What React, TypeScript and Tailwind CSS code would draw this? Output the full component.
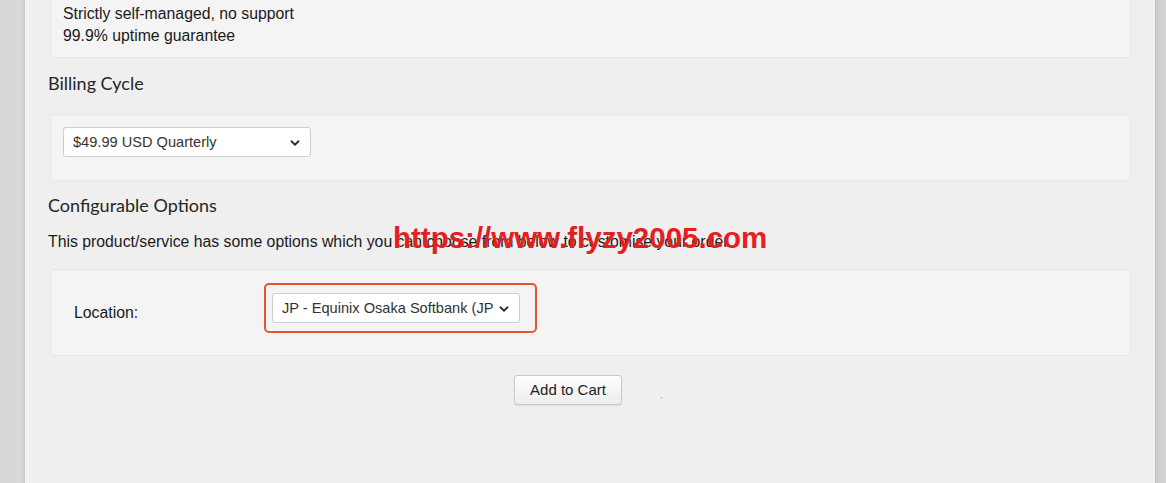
import { ChevronDown } from "lucide-react";

const sans = { fontFamily: '"Liberation Sans", Arial, sans-serif' };

const Card = ({ className, children }: { className?: string; children: React.ReactNode }) => (
  <div
    className={`mx-[2px] rounded-[3px] border border-[#e7e7e7] bg-[#f4f4f4] shadow-[inset_0_1px_1px_rgba(0,0,0,0.03)] ${className ?? ""}`}
  >
    {children}
  </div>
);

const FakeSelect = ({ label, width }: { label: string; width: string }) => (
  <div
    className={`flex h-[30px] items-center justify-between overflow-hidden rounded-[3px] border border-[#cdcdcd] bg-white pl-[9px] pr-[8px] pt-[2px] text-[14.6px] text-[#333] ${width}`}
  >
    <span className="overflow-hidden whitespace-nowrap">{label}</span>
    <ChevronDown className="ml-1 h-[14px] w-[14px] shrink-0 text-[#333]" strokeWidth={3.2} />
  </div>
);

const Heading = ({ children, className }: { children: React.ReactNode; className?: string }) => (
  <h3
    className={`h-[26px] text-[18px] font-normal leading-[26px] text-[#262626] ${className ?? ""}`}
    style={{ fontFamily: 'Lato, "Open Sans", sans-serif' }}
  >
    {children}
  </h3>
);

export default function App() {
  return (
    <div className="flex h-[483px] w-[1166px] overflow-hidden bg-[#d6d6d6]" style={sans}>
      <div className="w-[25px] shrink-0 bg-[linear-gradient(to_right,#d8d8d8_85%,#c9c9c9)]" />
      <div className="relative w-[1130px] shrink-0 border-l-[4px] border-[#f3f3f3] bg-[#efefef] pl-[19px] pr-[22px]">
        <Card className="-mt-[20px] px-[12px] pt-[22px] pb-[10px] text-[15.8px] leading-[22px] text-[#1a1a1a]">
          <p>Strictly self-managed, no support</p>
          <p>99.9% uptime guarantee</p>
        </Card>

        <Heading className="mt-[12px] mb-[18px]">Billing Cycle</Heading>

        <Card className="px-[12px] pt-[12px] pb-[23px]">
          <FakeSelect label="$49.99 USD Quarterly" width="w-[248px]" />
        </Card>

        <Heading className="mt-[11px]">Configurable Options</Heading>

        <div className="relative mt-[13px] h-[22px]">
          <p className="text-[15.8px] leading-[22px] text-[#1a1a1a]">
            This product/service has some options which you can choose from below to customise your order.
          </p>
          <span className="absolute left-[345px] top-[-13px] whitespace-nowrap text-[29.5px] font-bold leading-[40px] text-[#e3201f]">
            https://www.flyzy2005.com
          </span>
        </div>

        <Card className="mt-[16px] flex items-center pl-[23px] pt-[13px] pb-[22px]">
          <span className="w-[190px] pt-[9px] text-[15.8px] text-[#1a1a1a]">Location:</span>
          <div className="rounded-[5px] border-[2px] border-[#e2542e] py-[8px] pl-[6px] pr-[15px]">
            <FakeSelect label="JP - Equinix Osaka Softbank (JP)" width="w-[248px]" />
          </div>
        </Card>

        <div className="mt-[19px] flex pl-[466px]">
          <button className="h-[30px] w-[108px] rounded-[3px] border border-[#c8c8c8] bg-[linear-gradient(#ffffff,#ececec)] text-[15px] text-[#222] shadow-[0_1px_1px_rgba(0,0,0,0.08)]">
            Add to Cart
          </button>
          <span className="ml-[39px] mt-[22px] h-[1px] w-[1px] bg-[#888]" />
        </div>
      </div>
      <div className="flex-1 border-l border-[#c2c2c2] bg-[linear-gradient(to_right,#cbcbcb,#d6d6d6)]" />
    </div>
  );
}
